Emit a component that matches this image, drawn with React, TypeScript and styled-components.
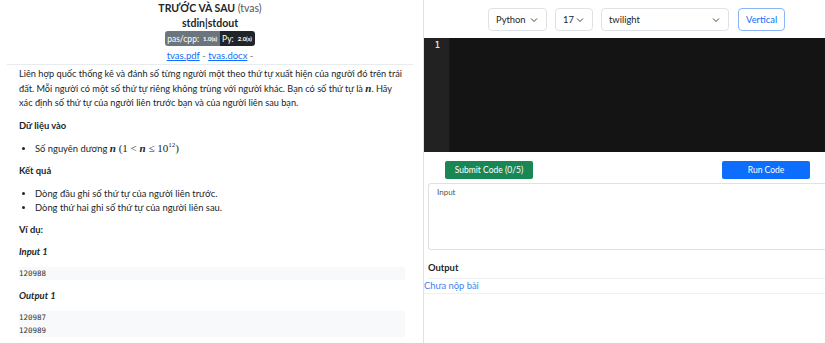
import * as React from "react";
import styled, { createGlobalStyle } from "styled-components";

const GlobalStyle = createGlobalStyle`
  html, body {
    margin: 0;
    padding: 0;
    background: #fff;
  }
  body {
    font-family: Lato, "Noto Sans", sans-serif;
    color: #212529;
    overflow: hidden;
  }
`;

const Page = styled.div`
  display: flex;
  width: 825px;
  height: 343px;
`;

const ProblemPane = styled.div`
  width: 424px;
  border-right: 1px solid #dee2e6;
  padding: 0 18px 0 19px;
  box-sizing: border-box;
  overflow: hidden;
`;

const Header = styled.div`
  display: flex;
  flex-direction: column;
  align-items: center;
  padding-top: 1px;
  padding-bottom: 1px;
  border-bottom: 1px solid #e9ecef;
  margin: 0 -8px 0 -12px;
`;

const Title = styled.div`
  font-size: 10.5px;
  font-weight: 700;
  line-height: 15px;
  span {
    font-weight: 400;
    color: #555;
  }
`;

const IoLine = styled.div`
  font-size: 10.5px;
  font-weight: 700;
  line-height: 15px;
`;

const Badges = styled.div`
  display: flex;
`;

const Badge = styled.div<{ $dark?: boolean }>`
  display: flex;
  align-items: center;
  gap: 4px;
  height: 15px;
  padding: 0 3px 0 2px;
  font-size: 8.5px;
  color: #fff;
  background: ${(p) => (p.$dark ? "#212529" : "#6c757d")};
  border-radius: ${(p) => (p.$dark ? "0 3px 3px 0" : "3px 0 0 3px")};
  b {
    font-size: 6px;
  }
`;

const Files = styled.div`
  margin-top: 3px;
  font-size: 9.5px;
  line-height: 14px;
  color: #6c757d;
  a {
    color: #0d6efd;
    text-decoration: underline;
  }
`;

const Paragraph = styled.p`
  margin: 2px 0 0;
  font-size: 9.2px;
  line-height: 14.5px;
`;

const Math = styled.span`
  font-family: "Liberation Serif", serif;
  font-size: 11px;
  line-height: 1;
  i {
    font-weight: 700;
  }
  sup {
    font-size: 7px;
    line-height: 1;
  }
`;

const Heading = styled.div<{ $italic?: boolean; $gap?: number }>`
  margin-top: ${(p) => p.$gap ?? 8}px;
  font-size: 9.4px;
  line-height: 14px;
  font-weight: 700;
  font-style: ${(p) => (p.$italic ? "italic" : "normal")};
`;

const List = styled.ul`
  margin: 9px 0 0;
  padding-left: 16px;
  font-size: 9.4px;
  line-height: 14px;
`;

const CodeBlock = styled.pre`
  margin: 8px 0 0;
  padding: 0;
  background: #f8f9fa;
  font-family: "DejaVu Sans Mono", monospace;
  font-size: 7.5px;
  line-height: 13px;
  color: #333;
`;

const EditorPane = styled.div`
  flex: 1;
  display: flex;
  flex-direction: column;
  min-width: 0;
`;

const Toolbar = styled.div`
  display: flex;
  gap: 8px;
  height: 38px;
  padding: 8px 0 0 64px;
  box-sizing: border-box;
`;

const Select = styled.div<{ $w: number }>`
  display: flex;
  align-items: center;
  justify-content: space-between;
  width: ${(p) => p.$w}px;
  height: 23px;
  box-sizing: border-box;
  padding: 0 8px 0 7px;
  border: 1px solid #dee2e6;
  border-radius: 4px;
  font-size: 9.4px;
  color: #212529;
`;

const Chevron = () => (
  <svg width="8" height="6" viewBox="0 0 8 6">
    <path d="M1 1.5 L4 4.5 L7 1.5" fill="none" stroke="#444" strokeWidth="1" />
  </svg>
);

const OutlineButton = styled.div`
  display: flex;
  align-items: center;
  height: 23px;
  padding: 0 7px;
  box-sizing: border-box;
  border: 1px solid #8bb4f7;
  border-radius: 4px;
  color: #0d6efd;
  font-size: 9.4px;
  margin-left: 1px;
`;

const Editor = styled.div`
  display: flex;
  height: 114px;
  background: #141414;
`;

const Gutter = styled.div`
  width: 26px;
  background: #222;
  border-right: 1px solid #1a1a1a;
  color: #e0e0e0;
  font-family: "DejaVu Sans Mono", monospace;
  font-size: 8px;
  font-weight: 700;
  line-height: 14px;
  padding-top: 1px;
  padding-left: 11px;
  box-sizing: border-box;
`;

const Actions = styled.div`
  display: flex;
  justify-content: space-between;
  padding: 9px 15px 0 21px;
`;

const ActionButton = styled.div<{ $color: string }>`
  display: flex;
  align-items: center;
  justify-content: center;
  width: 88px;
  height: 18px;
  border-radius: 2px;
  background: ${(p) => p.$color};
  color: #fff;
  font-size: 8.5px;
`;

const InputArea = styled.div`
  margin: 4px 0 0 4px;
  height: 67px;
  border: 1px solid #dee2e6;
  border-right: none;
  border-radius: 3px 0 0 3px;
  padding: 3px 8px;
  box-sizing: border-box;
  font-size: 8px;
  color: #555;
`;

const OutputLabel = styled.div`
  margin: 11px 0 0 4px;
  font-size: 9.4px;
  font-weight: 700;
  line-height: 13px;
  padding-bottom: 4px;
  border-bottom: 1px solid #eef0f2;
`;

const Status = styled.div`
  font-size: 9.4px;
  line-height: 14px;
  color: #3b82f6;
  border-bottom: 1px solid #eef0f2;
`;

const App: React.FC = () => {
  return (
    <Page>
      <GlobalStyle />
      <ProblemPane>
        <Header>
          <Title>
            TRƯỚC VÀ SAU <span>(tvas)</span>
          </Title>
          <IoLine>stdin|stdout</IoLine>
          <Badges>
            <Badge>
              pas/cpp: <b>1.0(s)</b>
            </Badge>
            <Badge $dark>
              Py: <b>2.0(s)</b>
            </Badge>
          </Badges>
          <Files>
            <a href="#">tvas.pdf</a> - <a href="#">tvas.docx</a> -
          </Files>
        </Header>
        <Paragraph>
          Liên hợp quốc thống kê và đánh số từng người một theo thứ tự xuất hiện của người đó trên trái
          đất. Mỗi người có một số thứ tự riêng không trùng với người khác. Bạn có số thứ tự là{" "}
          <Math>
            <i>n</i>
          </Math>
          . Hãy xác định số thứ tự của người liên trước bạn và của người liên sau bạn.
        </Paragraph>
        <Heading>Dữ liệu vào</Heading>
        <List>
          <li>
            Số nguyên dương{" "}
            <Math>
              <i>n</i> (1 &lt; <i>n</i> ≤ 10<sup>12</sup>)
            </Math>
          </li>
        </List>
        <Heading>Kết quả</Heading>
        <List>
          <li>Dòng đầu ghi số thứ tự của người liên trước.</li>
          <li>Dòng thứ hai ghi số thứ tự của người liên sau.</li>
        </List>
        <Heading>Ví dụ:</Heading>
        <Heading $italic>Input 1</Heading>
        <CodeBlock>120988</CodeBlock>
        <Heading $italic $gap={9}>
          Output 1
        </Heading>
        <CodeBlock>
          120987
          {"\n"}120989
        </CodeBlock>
      </ProblemPane>
      <EditorPane>
        <Toolbar>
          <Select $w={59}>
            Python <Chevron />
          </Select>
          <Select $w={38}>
            17 <Chevron />
          </Select>
          <Select $w={128}>
            twilight <Chevron />
          </Select>
          <OutlineButton>Vertical</OutlineButton>
        </Toolbar>
        <Editor>
          <Gutter>1</Gutter>
        </Editor>
        <Actions>
          <ActionButton $color="#198754">Submit Code (0/5)</ActionButton>
          <ActionButton $color="#0d6efd">Run Code</ActionButton>
        </Actions>
        <InputArea>Input</InputArea>
        <OutputLabel>Output</OutputLabel>
        <Status>Chưa nộp bài</Status>
      </EditorPane>
    </Page>
  );
};

export default App;
